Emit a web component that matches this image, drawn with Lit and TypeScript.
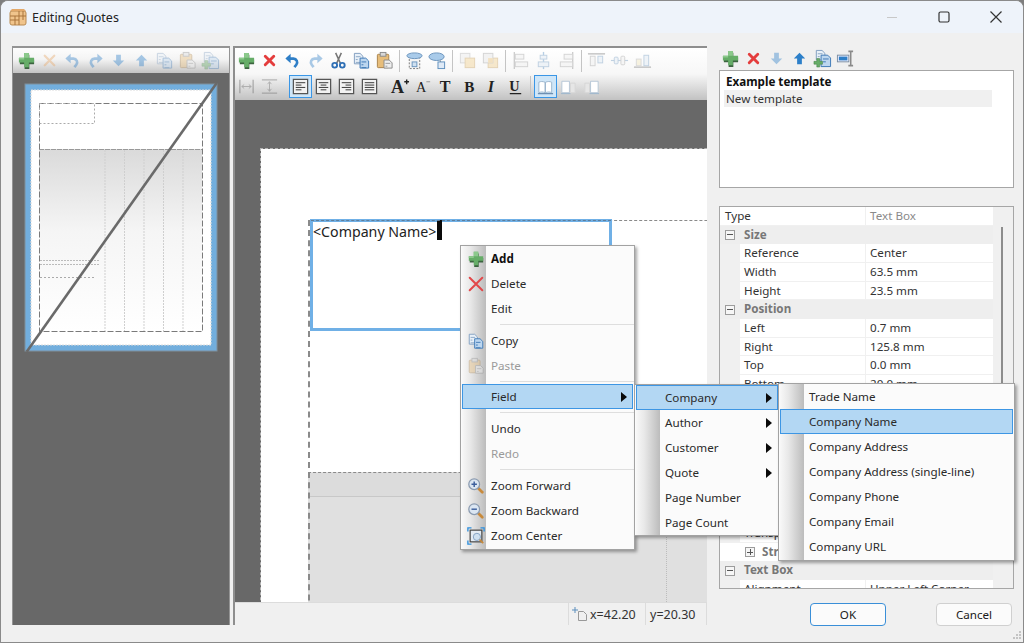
import { LitElement, html, css, svg } from "lit";
import { customElement } from "lit/decorators.js";

const doc = (x: number, y: number, w: number, h: number, f = "#dfeaf6", s = "#7f9dbf") =>
  svg`<path d="M${x} ${y}h${w - 3}l3 3v${h - 3}h-${w}z" fill="${f}" stroke="${s}" stroke-width="1"/>`;
const lines = (x: number, y: number, n: number, w: number, c = "#555", step = 3) =>
  svg`${Array.from({ length: n }, (_, i) => svg`<path d="M${x} ${y + i * step + 0.5}h${i % 2 ? w - 3 : w}" stroke="${c}" stroke-width="1"/>`)}`;
const mag = (sym: string) => svg`
  <path d="M12 12l5 5" stroke="#c88a3c" stroke-width="3" stroke-linecap="round"/>
  <circle cx="8" cy="8" r="6" fill="#dbe6f2" stroke="#8b9bb0" stroke-width="1.4"/>
  <path d="${sym}" stroke="#3c5f9c" stroke-width="1.6" fill="none"/>`;

const ICONS: Record<string, unknown> = {
  plus: svg`<path d="M8 3h5v5h5v5h-5v5H8v-5H3V8h5z" fill="#3d6440" transform="translate(0 1)"/><path d="M7.500 2h5v5h5.500v5h-5.500v5h-5v-5H2V7h5.500z" fill="#66ad68"/><path d="M7.500 2h5v5h-5zM2 7h5.500v2H2z" fill="#8cc98c"/>`,
  x: svg`<path d="M5.500 5.500l9 9M14.500 5.500l-9 9" stroke="#e43d3d" stroke-width="3" stroke-linecap="round"/>`,
  xo: svg`<path d="M5 5l10 10M15 5L5 15" stroke="#e8a868" stroke-width="2.400" stroke-linecap="round"/>`,
  xthin: svg`<path d="M3 3l14 14M17 3L3 17" stroke="#e2484a" stroke-width="2.200" stroke-linecap="round"/>`,
  undo: svg`<path d="M6 8h5a4 4 0 0 1 3 6.500L12 17" fill="none" stroke="#2f7fc7" stroke-width="2.800"/><path d="M8 3v10L2.500 8z" fill="#2f7fc7"/>`,
  redo: svg`<path d="M14 8H9a4 4 0 0 0-3 6.500L8 17" fill="none" stroke="#2f7fc7" stroke-width="2.800"/><path d="M12 3v10L17.500 8z" fill="#2f7fc7"/>`,
  cut: svg`<path d="M7 2l5 11M13 2L8 13" stroke="#777" stroke-width="1.600"/><circle cx="6" cy="15" r="2.500" fill="none" stroke="#2f6fb5" stroke-width="2"/><circle cx="14" cy="15" r="2.500" fill="none" stroke="#2f6fb5" stroke-width="2"/>`,
  down: svg`<path d="M7.500 4h5v6h3.500l-6 6-6-6h3.500z" fill="#2c7fc9"/>`,
  up: svg`<path d="M10 4l6 6h-3.500v6h-5v-6H4z" fill="#2c7fc9"/>`,
  copy: svg`${doc(2.500, 2.500, 9, 11, "#e8f0f8")}${lines(4, 5.500, 3, 5, "#8aa6c4")}${doc(8.500, 7.500, 9, 10.500, "#bcd6ef", "#3d78b5")}${lines(10, 11, 3, 5, "#3d78b5")}`,
  paste: svg`<rect x="2.500" y="3.500" width="12" height="14" rx="1" fill="#e7bd7a" stroke="#a9824a"/><rect x="5.500" y="1.500" width="6" height="4" fill="#d8d8d8" stroke="#8a8a8a"/>${doc(9.500, 9.500, 8.500, 8.500, "#eee", "#8a8a8a")}${lines(11, 12.500, 2, 5, "#999")}`,
  copyadd: svg`${doc(3.500, 1.500, 9, 10, "#e8f0f8")}${lines(5, 4.500, 2, 5, "#8aa6c4")}${doc(8.500, 6.500, 10, 12, "#bcd6ef", "#3d78b5")}${lines(10.500, 10, 2, 6, "#3d78b5")}<path d="M4 10h3v3h3v3H7v3H4v-3H1v-3h3z" fill="#66ad68" stroke="#3d7a40" stroke-width=".5"/>`,
  framed: svg`<rect x="4.500" y="6.500" width="11" height="12" fill="#f4f4f4" stroke="#777" stroke-dasharray="2 1.500"/><ellipse cx="10" cy="5" rx="8" ry="3" fill="#a9cbea" stroke="#6a94bd"/><rect x="7.500" y="11.500" width="5" height="5" fill="#cfe0f0" stroke="#6a94bd"/>`,
  callout: svg`<ellipse cx="9" cy="6" rx="8" ry="4" fill="#a9cbea" stroke="#6a94bd"/><path d="M13 10v3" stroke="#777"/><rect x="10.500" y="11.500" width="7" height="7" fill="#dfeaf6" stroke="#5f8fbd"/>`,
  front: svg`<rect x="2.500" y="2.500" width="10" height="10" fill="#e8e8e8" stroke="#aaa"/><rect x="7.500" y="7.500" width="10" height="10" fill="#f1cd86" stroke="#c49a50"/>`,
  back: svg`<rect x="7.500" y="7.500" width="10" height="10" fill="#f1cd86" stroke="#c49a50"/><rect x="2.500" y="2.500" width="10" height="10" fill="#e4e4e4" stroke="#999"/><rect x="7.500" y="7.500" width="5" height="5" fill="#e8bb6a"/>`,
  alignL: svg`<path d="M3.500 1v18" stroke="#888" stroke-width="1.400"/><rect x="4.500" y="3.500" width="9" height="5" fill="#eee" stroke="#999"/><rect x="4.500" y="11.500" width="13" height="5" fill="#eee" stroke="#999"/>`,
  alignC: svg`<path d="M10 1v18" stroke="#4f8bc4" stroke-width="1.400"/><rect x="6.500" y="4.500" width="7" height="4" fill="#dce8f3" stroke="#6a94bd"/><rect x="4.500" y="11.500" width="11" height="5" fill="#dce8f3" stroke="#6a94bd"/>`,
  alignR: svg`<path d="M16.500 1v18" stroke="#888" stroke-width="1.400"/><rect x="7.500" y="3.500" width="9" height="5" fill="#eee" stroke="#999"/><rect x="3.500" y="11.500" width="13" height="5" fill="#eee" stroke="#999"/>`,
  alignT: svg`<path d="M1 3h18" stroke="#777" stroke-width="1.600"/><rect x="3.500" y="5.500" width="5" height="10" fill="#eee" stroke="#999"/><rect x="11.500" y="5.500" width="5" height="7" fill="#dce8f3" stroke="#6a94bd"/>`,
  alignM: svg`<path d="M1 10h18" stroke="#6a94bd" stroke-width="1.200"/><rect x="4.500" y="6.500" width="4" height="7" rx="1" fill="#dce8f3" stroke="#6a94bd"/><rect x="11.500" y="5.500" width="4" height="9" rx="1" fill="#eee" stroke="#999"/>`,
  alignB: svg`<path d="M1 17h18" stroke="#777" stroke-width="1.600"/><rect x="3.500" y="8.500" width="5" height="7" fill="#f1e6b8" stroke="#aaa"/><rect x="11.500" y="4.500" width="5" height="11" fill="#dce8f3" stroke="#6a94bd"/>`,
  distH: svg`<path d="M3 3v14M17 3v14" stroke="#666" stroke-width="1.500"/><path d="M5 10h10M5 10l2.500-2M5 10l2.500 2M15 10l-2.500-2M15 10l-2.500 2" stroke="#666" fill="none"/>`,
  distV: svg`<path d="M2 3h16M2 17h16" stroke="#666" stroke-width="1.500"/><path d="M10 5v10M10 5L8 7.500M10 5l2 2.500M10 15l-2-2.500M10 15l2-2.500" stroke="#666" fill="none"/>`,
  tLeft: svg`<rect x="2.500" y="2.500" width="15" height="15" fill="#f2f2f2" stroke="#555" stroke-width="1.300"/><path d="M5 6h10M5 8.500h6M5 11h10M5 13.500h6" stroke="#333"/>`,
  tCenter: svg`<rect x="2.500" y="2.500" width="15" height="15" fill="#f2f2f2" stroke="#555" stroke-width="1.300"/><path d="M5 6h10M7 8.500h6M5 11h10M7 13.500h6" stroke="#333"/>`,
  tRight: svg`<rect x="2.500" y="2.500" width="15" height="15" fill="#f2f2f2" stroke="#555" stroke-width="1.300"/><path d="M5 6h10M9 8.500h6M5 11h10M9 13.500h6" stroke="#333"/>`,
  tJust: svg`<rect x="2.500" y="2.500" width="15" height="15" fill="#f2f2f2" stroke="#555" stroke-width="1.300"/><path d="M5 6h10M5 8.500h10M5 11h10M5 13.500h10" stroke="#333"/>`,
  Aup: svg`<text x="0" y="17" class="g b" font-size="19">A</text><path d="M14 5h5M16.500 2.500v5" stroke="#222" stroke-width="1.500"/>`,
  Adn: svg`<text x="2" y="16" class="g" font-size="15" fill="#9a9a9a">A</text><path d="M13 5h4" stroke="#9a9a9a" stroke-width="1.300"/>`,
  T: svg`<text x="3" y="16" class="g b" font-size="17" fill="#666">T</text>`,
  B: svg`<text x="4.500" y="16" class="g b" font-size="16">B</text>`,
  I: svg`<text x="5" y="16" class="g b i" font-size="17">I</text>`,
  U: svg`<text x="3.500" y="14.500" class="g b" font-size="15">U</text><path d="M4 17.500h12" stroke="#222" stroke-width="1.400"/>`,
  book1: svg`<path d="M3 5.500c2-1 4-1 6.500 0v11c-2.500-1-4.500-1-6.500 0zM16.500 5.500c-2-1-4-1-6.500 0v11c2.500-1 4.500-1 6.500 0z" fill="#fff" stroke="#9ab4cc"/><path d="M2 17.500h16" stroke="#6d8fb2" stroke-width="1.500"/>`,
  book2: svg`<path d="M3 4.500h8v12H3z" fill="#fff" stroke="#b5c6d6"/><path d="M12 6.500h5v10h-5z" fill="#e6e6e6" stroke="#d6d6d6"/><path d="M2 17.500h10" stroke="#9ab4cc"/>`,
  book3: svg`<path d="M3 6.500h5v10H3z" fill="#e6e6e6" stroke="#d6d6d6"/><path d="M9 4.500h8v12H9z" fill="#fff" stroke="#b5c6d6"/><path d="M8 17.500h10" stroke="#9ab4cc"/>`,
  rename: svg`<rect x="1.500" y="6.500" width="12" height="7" fill="#eef" stroke="#7a8ea3"/><rect x="3" y="8" width="9" height="4" fill="#2f7fc7"/><path d="M15.500 3v14M13 2.500h5M13 17.500h5" stroke="#8a8a8a" stroke-width="1.600" fill="none"/>`,
  zin: mag("M5 8h6M8 5v6"),
  zout: mag("M5 8h6"),
  zcenter: svg`<path d="M1 5V1h4M15 1h4v4M1 15v4h4" stroke="#2f8fdc" stroke-width="1.500" fill="none"/><rect x="3.500" y="3.500" width="13" height="13" fill="#e4ebf3" stroke="#444" stroke-width="1.300"/><circle cx="11" cy="11" r="4" fill="#cfe0f0" stroke="#7f9dbf"/><path d="M14 14l4 4" stroke="#c88a3c" stroke-width="2"/>`,
};

const icon = (n: string) => html`<svg class="ico" viewBox="0 0 20 20">${ICONS[n]}</svg>`;

type Tool = { i: string; dim?: boolean; sel?: boolean } | "sep" | "gap";
const bar = (items: Tool[]) =>
  items.map((t) =>
    t === "sep"
      ? html`<span class="sep"></span>`
      : t === "gap"
      ? html`<span class="gap"></span>`
      : html`<span class="tb ${t.dim ? "dim" : ""} ${t.sel ? "sel" : ""}">${icon(t.i)}</span>`
  );

const leftTools: Tool[] = [
  { i: "plus" }, { i: "xo", dim: true }, { i: "undo", dim: true }, { i: "redo", dim: true }, { i: "down", dim: true },
  { i: "up", dim: true }, { i: "copy", dim: true }, { i: "paste", dim: true }, { i: "copyadd", dim: true },
];
const row1: Tool[] = [
  { i: "plus" }, { i: "x" }, { i: "undo" }, { i: "redo", dim: true }, { i: "cut" }, { i: "copy" }, { i: "paste" }, "sep",
  { i: "framed" }, { i: "callout" }, "sep", { i: "front", dim: true }, { i: "back", dim: true }, "sep",
  { i: "alignL", dim: true }, { i: "alignC", dim: true }, { i: "alignR", dim: true }, "sep",
  { i: "alignT", dim: true }, { i: "alignM", dim: true }, { i: "alignB", dim: true },
];
const row2: Tool[] = [
  { i: "distH", dim: true }, { i: "distV", dim: true }, "gap",
  { i: "tLeft", sel: true }, { i: "tCenter" }, { i: "tRight" }, { i: "tJust" }, "gap",
  { i: "Aup" }, { i: "Adn" }, { i: "T" }, { i: "B" }, { i: "I" }, { i: "U" }, "sep",
  { i: "book1", sel: true }, { i: "book2" }, { i: "book3" },
];
const rightTools: Tool[] = [
  { i: "plus" }, { i: "x" }, { i: "down", dim: true }, { i: "up" }, { i: "copyadd" }, { i: "rename" },
];

type Prop = { s?: string; sub?: boolean; n?: string; v?: string; top?: boolean };
const props: Prop[] = [
  { n: "Type", v: "Text Box", top: true },
  { s: "Size" },
  { n: "Reference", v: "Center" }, { n: "Width", v: "63.5 mm" }, { n: "Height", v: "23.5 mm" },
  { s: "Position" },
  { n: "Left", v: "0.7 mm" }, { n: "Right", v: "125.8 mm" }, { n: "Top", v: "0.0 mm" }, { n: "Bottom", v: "20.0 mm" },
  {}, {}, {}, {}, {}, {}, {},
  { n: "Transp", v: "" },
  { s: "Str", sub: true },
  { s: "Text Box" },
  { n: "Alignment", v: "Upper Left Corner" },
];

type Item = { t?: string; i?: string; b?: boolean; off?: boolean; hot?: boolean; arrow?: boolean } | "-" | "s";
const m1: Item[] = [
  { t: "Add", i: "plus", b: true }, { t: "Delete", i: "xthin" }, { t: "Edit" }, "-",
  { t: "Copy", i: "copy" }, { t: "Paste", i: "paste", off: true }, "s",
  { t: "Field", hot: true, arrow: true }, "-",
  { t: "Undo" }, { t: "Redo", off: true }, "-",
  { t: "Zoom Forward", i: "zin" }, { t: "Zoom Backward", i: "zout" }, { t: "Zoom Center", i: "zcenter" },
];
const m2: Item[] = [
  { t: "Company", hot: true, arrow: true }, { t: "Author", arrow: true }, { t: "Customer", arrow: true }, { t: "Quote", arrow: true },
  { t: "Page Number" }, { t: "Page Count" },
];
const m3: Item[] = [
  { t: "Trade Name" }, { t: "Company Name", hot: true }, { t: "Company Address" }, { t: "Company Address (single-line)" },
  { t: "Company Phone" }, { t: "Company Email" }, { t: "Company URL" },
];
const menu = (cls: string, items: Item[]) => html`<div class="menu ${cls}">
  ${items.map((it) =>
    typeof it === "string"
      ? html`<div class="msep ${it === "s" ? "short" : ""}"></div>`
      : html`<div class="mi ${it.hot ? "hot" : ""} ${it.off ? "off" : ""} ${it.b ? "bold" : ""}">
          <span class="mic ${it.off ? "dim" : ""}">${it.i ? icon(it.i) : ""}</span>
          <span class="mt">${it.t}</span>${it.arrow ? html`<span class="arr"></span>` : ""}
        </div>`
  )}
</div>`;

@customElement("app-root")
export class AppRoot extends LitElement {
  static styles = css`
    :host { display: block; width: 1024px; height: 643px; overflow: hidden; background: #7e7e7e;
      font-family: "Noto Sans", sans-serif; font-size: 11.650px; color: #1c1c1c; }
    * { box-sizing: border-box; }
    .win { position: relative; width: 1024px; height: 643px; background: #f0f0f0; border: 1px solid #8a8a8a;
      border-radius: 8px 8px 0 0; overflow: hidden; display: flex; flex-direction: column; }
    .title { height: 32px; flex: none; background: #eef3fa; display: flex; align-items: center; padding: 0 1px 0 8px; font-size: 12.500px; }
    .title .logo { width: 18px; height: 18px; margin-right: 5px; }
    .title .name { flex: 1; color: #222; }
    .wc { width: 52px; height: 32px; display: flex; align-items: center; justify-content: center; }
    .wc svg { width: 14px; height: 14px; }
    .main { flex: 1; display: flex; padding: 13px 9px 17px 11px; min-height: 0; }
    .left { width: 218px; margin-right: 3px; display: flex; flex-direction: column; border: solid #949494; border-width: 2px 1px 0 1.500px; background: #686868; }
    .lbar { height: 25px; background: linear-gradient(#fdfdfd, #f4f4f4 45%, #c4c4c4); display: flex; align-items: center; padding-left: 2px; flex: none; }
    .thumbwrap { flex: 1; position: relative; }
    .thumb { position: absolute; left: 10.500px; top: 9px; width: 196px; height: 270px; overflow: visible; }
    .center { width: 474px; display: flex; flex-direction: column; border-top: 2px solid #8e8e8e; border-left: 2px solid #8e8e8e; }
    .cbar { height: 52px; flex: none; background: linear-gradient(#fff, #f7f7f7 50%, #c2c2c2); }
    .cr { display: flex; align-items: center; }
    .cr.r1 { height: 25px; }
    .cr.r2 { height: 27px; }
    .tb { width: 23px; height: 23px; display: flex; align-items: center; justify-content: center; flex: none; }
    .ico { width: 19px; height: 19px; display: block; overflow: visible; }
    .g { font-family: "Liberation Serif", serif; fill: #222; }
    .g.b { font-weight: 700; }
    .g.i { font-style: italic; }
    .dim { opacity: .4; }
    .sel { outline: 1px solid #3a96e6; outline-offset: -1px; background: #cfe6f8; }
    .sep { width: 7px; height: 22px; flex: none; position: relative; }
    .sep::after { content: ""; position: absolute; left: 3px; top: 0; bottom: 0; width: 1px; background: #c4c4c4; }
    .gap { width: 8px; flex: none; }
    .canvas { flex: 1; background: #686868; position: relative; overflow: hidden; }
    .page { position: absolute; left: 26px; top: 49px; width: 600px; height: 600px; background: #fff; outline: 1px dashed #b5b5b5; }
    .frame { position: absolute; left: 73px; top: 120px; width: 560px; height: 500px; border: 1px dashed #8a8a8a; border-width: 1px 0 0 2px; }
    .tablebox { position: absolute; left: 73px; top: 372px; width: 560px; height: 200px; background: #e0e0e0; border-top: 1px dashed #8a8a8a; border-left: 2px dashed #8a8a8a; }
    .thead { height: 24px; background: #dcdcdc; border-bottom: 1px solid #c8c8c8; }
    .vline { position: absolute; left: 356px; top: 0; bottom: 0; width: 1px; border-left: 1px dotted #bcbcbc; }
    .tbox { position: absolute; left: 75px; top: 119px; width: 302px; height: 112px; border: 3px solid #70b0e6; font-size: 14.200px; padding: 0 0 0 0; line-height: 20px; color: #222; display: flex; align-items: flex-start; }
    .tbox::before { content: ""; position: absolute; left: -2px; right: -2px; top: -2px; border-top: 1px dashed #5f7f9c; }
    .caret { display: inline-block; width: 5px; height: 20px; background: #0a0a0a; margin-left: 1px; margin-top: -2px; }
    .status { height: 23px; flex: none; background: #f0f0f0; border-top: 1px solid #dcdcdc; display: flex; justify-content: flex-end; align-items: center; font-size: 12.500px; }
    .st { height: 22px; display: flex; align-items: center; border-left: 1px solid #dcdcdc; color: #333; }
    .st.a { width: 77px; padding-left: 3px; }
    .st.a svg { width: 16px; height: 16px; flex: none; }
    .st.a span { margin-left: 2px; }
    .st.b { width: 62px; padding-left: 4px; border-right: 1px solid #dcdcdc; }
    .right { width: 295px; margin-left: 12px; display: flex; flex-direction: column; }
    .rbar { height: 24px; display: flex; align-items: center; flex: none; }
    .list { height: 118px; flex: none; background: #fff; border: 1px solid #a6a6a6; padding: 2px 4px; line-height: 17px; }
    .list .b { font-weight: 700; padding-left: 2px; color: #111; height: 17px; }
    .list .n { background: #f0f0f0; width: 268px; padding-left: 2px; height: 17px; color: #333; }
    .props { margin-top: 18px; height: 383px; flex: none; border: 1px solid #a6a6a6; background: #f0f0f0; position: relative; overflow: hidden; }
    .pr { display: flex; height: 18.660px; width: 273px; line-height: 17px; color: #333; }
    .pr .gut { width: 20px; flex: none; display: flex; align-items: center; justify-content: center; }
    .pr .pn { width: 125px; background: #fff; padding-left: 4px; margin-bottom: 1px; flex: none; }
    .pr .pv { flex: 1; background: #fff; margin: 0 0 1px 1px; padding-left: 4px; }
    .pr.top .gut { display: none; }
    .pr.top .pn { width: 145px; padding-left: 5px; }
    .pr.top .pv { color: #8a8a8a; }
    .pr.sec { background: #eeeeee; font-weight: 700; color: #777; }
    .pr.sec .st2 { padding-left: 4px; }
    .pr.sub { background: #fff; }
    .pr.sub .st2 { padding-left: 2px; }
    .exp { width: 10px; height: 10px; border: 1px solid #9c9c9c; background: #f6f6f6; position: relative; flex: none; }
    .exp::after { content: ""; position: absolute; left: 1px; right: 1px; top: 3.500px; height: 1px; background: #555; }
    .exp.pl::before { content: ""; position: absolute; top: 1px; bottom: 1px; left: 3.500px; width: 1px; background: #555; }
    .sb { position: absolute; left: 281px; top: 20px; width: 2px; height: 330px; background: #8c8c8c; }
    .btns { display: flex; justify-content: flex-end; gap: 50px; margin-top: 14px; padding-right: 2px; }
    .btn { width: 76px; height: 23px; background: #fbfbfb; border: 1px solid #d0d0d0; border-radius: 4px; display: flex; align-items: center; justify-content: center; color: #1a1a1a; }
    .btn.def { border: 1.500px solid #3a8fd8; }
    .grip { position: absolute; right: 1px; bottom: 1px; width: 12px; height: 12px; }
    .menu { position: absolute; background: #fbfbfb; border: 1px solid #a2a2a2; box-shadow: 2px 2px 3px rgba(0,0,0,.35); }
    .menu::before { content: ""; position: absolute; top: 0; bottom: 0; left: 1px; width: 24px; background: linear-gradient(90deg, #f8f8f8, #e8e8e8 35%, #bcbcbc); }
    .m1 { left: 459px; top: 244px; width: 175px; height: 305px; z-index: 1; }
    .m2 { left: 633px; top: 383px; width: 146px; height: 152px; z-index: 2; }
    .m3 { left: 777px; top: 382px; width: 237px; height: 178px; z-index: 3; }
    .mi { height: 25px; display: flex; align-items: center; position: relative; margin: 0 1px; border: 1px solid transparent; color: #2a2a2a; }
    .mi.hot { background: #b3d7f3; border-color: #3d96e4; }
    .mi.off { color: #9a9a9a; }
    .mi.bold { font-weight: 700; color: #111; }
    .mic { width: 29px; flex: none; display: flex; justify-content: center; position: relative; margin-left: -1px; padding-right: 1px; }
    .mic .ico { width: 18px; height: 18px; }
    .mt { flex: 1; position: relative; white-space: nowrap; }
    .arr { width: 0; height: 0; border: 5px solid transparent; border-left: 6px solid #0a0a0a; border-right: 0; margin-right: 5px; }
    .msep { height: 7px; position: relative; }
    .msep.short { height: 6px; }
    .msep::after { content: ""; position: absolute; left: 39px; right: 0; top: 3px; height: 1px; background: #dedede; }
  `;

  private thumb() {
    return svg`<svg class="thumb" viewBox="0 0 196 270">
      <defs>
        <linearGradient id="tg" x1="0" y1="0" x2="0" y2="1"><stop offset="0" stop-color="#dadada"/><stop offset=".45" stop-color="#f5f5f5"/><stop offset="1" stop-color="#fff"/></linearGradient>
      </defs>
      <rect x="1" y="2" width="192" height="267" fill="#72aedd" stroke="#7f8f9c"/>
      <rect x="7" y="8" width="180" height="255" fill="#fff" stroke="#dcdcdc" stroke-dasharray="2 1"/>
      <rect x="15" y="67" width="163" height="182" fill="url(#tg)"/>
      <rect x="15.500" y="21.500" width="163" height="228" fill="none" stroke="#7a7a7a" stroke-dasharray="6 2"/>
      <rect x="15.500" y="21.500" width="55" height="20" fill="none" stroke="#aaa" stroke-dasharray="2 2"/>
      <path d="M15 67.500h163" stroke="#999" stroke-dasharray="5 1"/>
      <path d="M81 68v181M100.500 68v181M120 68v181M139.500 68v181M159 68v181" stroke="#cfcfcf" stroke-dasharray="2 1"/>
      <path d="M16 178.500h60M16 182.500h60" stroke="#bbb" stroke-dasharray="2 1"/>
      <path d="M16 195.500h55" stroke="#aaa" stroke-dasharray="2 2"/>
      <path d="M192.700 1L2.700 269.700" stroke="#6a6a6a" stroke-width="2.600"/>
    </svg>`;
  }

  render() {
    return html`<div class="win">
      <div class="title">
        <svg class="logo" viewBox="0 0 18 18">
          <rect x="1" y="3" width="16" height="14" rx="2" fill="#f0c48c" stroke="#b98a52"/>
          <path d="M1 8h16M1 12h9M10 3v14M6 8v9M14 3v9" stroke="#a9743c" stroke-width="1" fill="none"/>
          <path d="M3 1h12l2 2H1z" fill="#e2a86a"/>
        </svg>
        <span class="name">Editing Quotes</span>
        <span class="wc"><svg viewBox="0 0 14 14"><path d="M2 7.500h10" stroke="#c8c8c8"/></svg></span>
        <span class="wc"><svg viewBox="0 0 14 14"><rect x="2" y="2" width="10" height="10" rx="1.500" fill="none" stroke="#333" stroke-width="1.200"/></svg></span>
        <span class="wc"><svg viewBox="0 0 14 14"><path d="M1.500 1.500l11 11M12.500 1.500l-11 11" stroke="#333" stroke-width="1.200"/></svg></span>
      </div>
      <div class="main">
        <div class="left">
          <div class="lbar">${bar(leftTools)}</div>
          <div class="thumbwrap">${this.thumb()}</div>
        </div>
        <div class="center">
          <div class="cbar">
            <div class="cr r1">${bar(row1)}</div>
            <div class="cr r2">${bar(row2)}</div>
          </div>
          <div class="canvas">
            <div class="page"></div>
            <div class="frame"></div>
            <div class="tablebox"><div class="thead"></div><span class="vline"></span></div>
            <div class="tbox"><span>&lt;Company Name&gt;</span><span class="caret"></span></div>
          </div>
          <div class="status">
            <span class="st a"><svg viewBox="0 0 16 16"><path d="M3 1v6M0 4h6" stroke="#5d8fbd"/><path d="M6.500 5.500h5l3 3v6h-8z" fill="none" stroke="#999"/></svg><span>x=42.20</span></span>
            <span class="st b">y=20.30</span>
          </div>
        </div>
        <div class="right">
          <div class="rbar">${bar(rightTools)}</div>
          <div class="list"><div class="b">Example template</div><div class="n">New template</div></div>
          <div class="props">
            ${props.map((p) =>
              p.s
                ? html`<div class="pr sec ${p.sub ? "sub" : ""}"><span class="gut">${p.sub ? "" : html`<span class="exp"></span>`}</span>
                    ${p.sub ? html`<span class="gut"><span class="exp pl"></span></span>` : ""}
                    <span class="st2">${p.s}</span></div>`
                : html`<div class="pr ${p.top ? "top" : ""}"><span class="gut"></span><span class="pn">${p.n ?? ""}</span><span class="pv">${p.v ?? ""}</span></div>`
            )}
            <span class="sb"></span>
          </div>
          <div class="btns"><span class="btn def">OK</span><span class="btn">Cancel</span></div>
        </div>
      </div>
      ${menu("m1", m1)}${menu("m2", m2)}${menu("m3", m3)}
      <svg class="grip" viewBox="0 0 12 12"><path d="M9 2h2v2H9zM6 5h2v2H6zM9 5h2v2H9zM3 8h2v2H3zM6 8h2v2H6zM9 8h2v2H9z" fill="#c4c4c4"/></svg>
    </div>`;
  }
}
